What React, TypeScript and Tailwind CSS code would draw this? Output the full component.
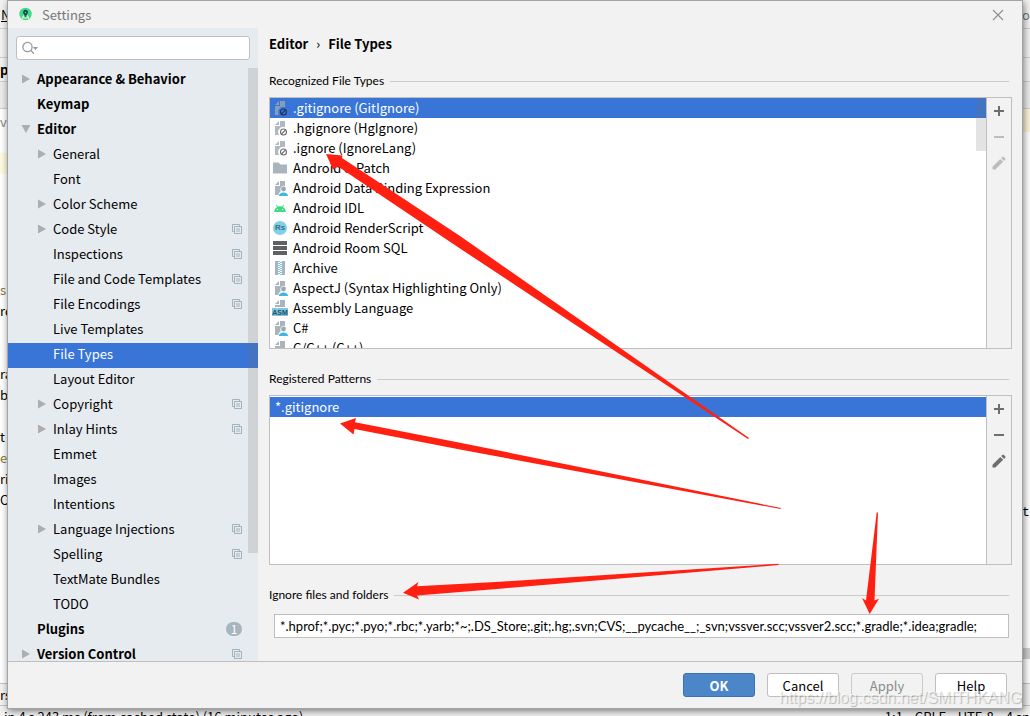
import type { ReactNode } from 'react';

type TreeItem = {
  label: string;
  level?: 0 | 1;
  arrow?: 'right' | 'down';
  project?: boolean;
  badge?: number;
  selected?: boolean;
};

const tree: TreeItem[] = [
  { label: 'Appearance & Behavior', level: 0, arrow: 'right' },
  { label: 'Keymap', level: 0 },
  { label: 'Editor', level: 0, arrow: 'down' },
  { label: 'General', arrow: 'right' },
  { label: 'Font' },
  { label: 'Color Scheme', arrow: 'right' },
  { label: 'Code Style', arrow: 'right', project: true },
  { label: 'Inspections', project: true },
  { label: 'File and Code Templates', project: true },
  { label: 'File Encodings', project: true },
  { label: 'Live Templates' },
  { label: 'File Types', selected: true },
  { label: 'Layout Editor' },
  { label: 'Copyright', arrow: 'right', project: true },
  { label: 'Inlay Hints', arrow: 'right', project: true },
  { label: 'Emmet' },
  { label: 'Images' },
  { label: 'Intentions' },
  { label: 'Language Injections', arrow: 'right', project: true },
  { label: 'Spelling', project: true },
  { label: 'TextMate Bundles' },
  { label: 'TODO' },
  { label: 'Plugins', level: 0, badge: 1 },
  { label: 'Version Control', level: 0, arrow: 'right', project: true },
];

function Page() {
  return (
    <g fill="#9aa7b0" fillOpacity="0.85">
      <path d="M7 1L3 5h4z" />
      <path d="M8 1v5H3v9h10V1z" />
    </g>
  );
}

function IconBox({ children }: { children: ReactNode }) {
  return (
    <svg viewBox="0 0 16 16" className="size-4 shrink-0" aria-hidden="true">
      {children}
    </svg>
  );
}

function IgnoreIcon({ selected }: { selected?: boolean }) {
  return (
    <IconBox>
      <g fill="#9aa7b0" fillOpacity="0.8">
        <path d="M7 1L3 5h4z" />
        <path d="M8 1v5H3v9h4.2A5 5 0 0 1 13 7.300V1z" />
      </g>
      <circle cx="11.500" cy="12" r="3" fill="none" stroke={selected ? '#1f3357' : '#6e6e6e'} strokeWidth="1.100" />
      <path d="M9.500 14l4-4" stroke={selected ? '#1f3357' : '#6e6e6e'} strokeWidth="1.100" />
    </IconBox>
  );
}

function UserFileIcon() {
  return (
    <IconBox>
      <g fill="#9aa7b0" fillOpacity="0.85">
        <path d="M7 1L3 5h4z" />
        <path d="M8 1v5H3v9h3.500c0-2 1-3 2.200-3.600A3.700 3.700 0 0 1 13 6V1z" />
      </g>
      <circle cx="11.500" cy="9" r="2.400" fill="#9aa7b0" />
      <path d="M7 16c0-2.300 1.800-3.500 4.500-3.500S16 13.700 16 16z" fill="#40b6e0" />
    </IconBox>
  );
}

function FolderIcon() {
  return (
    <IconBox>
      <path d="M1 2.500h5.500l2 2H15V13.500H1z" fill="#9aa7b0" fillOpacity="0.85" />
    </IconBox>
  );
}

function AndroidIcon() {
  return (
    <IconBox>
      <path d="M2 12a6 6 0 0 1 3-5L3.900 5l.7-.4L5.800 6.600a6.300 6.300 0 0 1 4.400 0l1.200-2 .7.4L11 7a6 6 0 0 1 3 5z" fill="#3ddc84" />
      <circle cx="5.400" cy="9.600" r=".7" fill="#fff" />
      <circle cx="10.600" cy="9.600" r=".7" fill="#fff" />
    </IconBox>
  );
}

function RenderScriptIcon() {
  return (
    <span className="flex size-4 shrink-0 items-center justify-center">
      <span className="flex size-3.5 items-center justify-center rounded-full bg-[#82cfea] font-['Liberation_Sans',sans-serif] text-[8px] leading-none font-bold text-[#3f6f82]">
        Rs
      </span>
    </span>
  );
}

function SqlIcon() {
  return (
    <IconBox>
      <path d="M1 1h14v4H1zM1 6h14v4H1zM1 11h14v4H1z" fill="#5f6163" />
    </IconBox>
  );
}

function ArchiveIcon() {
  return (
    <IconBox>
      <path d="M3 1h3v14H3zM10 1h3v14h-3z" fill="#9aa7b0" fillOpacity="0.85" />
      <path
        d="M6 1h2v1H6zM8 2h2v1H8zM6 3h2v1H6zM8 4h2v1H8zM6 5h2v1H6zM8 6h2v1H8zM6 7h2v1H6zM8 8h2v1H8zM6 9h2v1H6zM8 10h2v1H8zM6 11h2v1H6zM8 12h2v1H8zM6 13h2v1H6zM8 14h2v1H8z"
        fill="#7cc8e6"
      />
    </IconBox>
  );
}

function AsmIcon() {
  return (
    <span className="flex size-4 shrink-0 flex-col">
      <svg viewBox="0 0 16 8" className="h-2 w-4" aria-hidden="true">
        <path d="M7 0L3 4h4zM8 0v5H3v2h10V0z" fill="#9aa7b0" fillOpacity="0.85" />
      </svg>
      <span className="flex h-2 items-center justify-center bg-[#7cc8e6] font-['Liberation_Sans',sans-serif] text-[7px] leading-none font-bold text-[#2b4a57]">
        ASM
      </span>
    </span>
  );
}

const fileTypes: { label: string; icon: ReactNode; selected?: boolean }[] = [
  { label: '.gitignore (GitIgnore)', icon: <IgnoreIcon selected />, selected: true },
  { label: '.hgignore (HgIgnore)', icon: <IgnoreIcon /> },
  { label: '.ignore (IgnoreLang)', icon: <IgnoreIcon /> },
  { label: 'Android & Patch', icon: <FolderIcon /> },
  { label: 'Android Data Binding Expression', icon: <UserFileIcon /> },
  { label: 'Android IDL', icon: <AndroidIcon /> },
  { label: 'Android RenderScript', icon: <RenderScriptIcon /> },
  { label: 'Android Room SQL', icon: <SqlIcon /> },
  { label: 'Archive', icon: <ArchiveIcon /> },
  { label: 'AspectJ (Syntax Highlighting Only)', icon: <UserFileIcon /> },
  { label: 'Assembly Language', icon: <AsmIcon /> },
  { label: 'C#', icon: <UserFileIcon /> },
  { label: 'C/C++ (C++)', icon: <IconBox><Page /></IconBox> },
];

function ProjectIcon() {
  return (
    <svg viewBox="0 0 10 10" className="size-2.5" aria-hidden="true">
      <path d="M2.500 7.500h-2v-7h7v2" fill="none" stroke="#a3b1ba" />
      <path d="M2.500 2.500h7v7h-7zM4 5h4M4 7h4" fill="none" stroke="#a3b1ba" />
    </svg>
  );
}

function TreeRow({ item }: { item: TreeItem }) {
  const top = item.level === 0;
  return (
    <li>
      <a
        href="#"
        aria-current={item.selected ? 'page' : undefined}
        className={`flex h-[25px] items-center pr-4 pb-[3px] ${top ? 'pl-[13px] font-bold' : 'pl-[29px]'} ${
          item.selected ? 'bg-[#3875d6] text-white' : 'text-black'
        }`}
      >
        <svg viewBox="0 0 16 10" className="h-2.5 w-4 shrink-0" aria-hidden="true">
          {item.arrow === 'right' && <path d="M1 .500v9L9 5z" fill="#adadad" />}
          {item.arrow === 'down' && <path d="M.500 1h9L5 9z" fill="#adadad" />}
        </svg>
        <span className="flex-1 whitespace-nowrap">{item.label}</span>
        {item.project && <ProjectIcon />}
        {item.badge && (
          <span className="flex h-3.5 w-4 items-center justify-center rounded-full bg-[#a7b5be] text-xs leading-none font-normal text-white">
            {item.badge}
          </span>
        )}
      </a>
    </li>
  );
}

function SectionTitle({ children }: { children: string }) {
  return (
    <div className="flex h-5 shrink-0 items-center gap-1.5 pr-[3px]">
      <h2 className="font-[Lato,sans-serif] text-xs whitespace-nowrap">{children}</h2>
      <span className="h-px flex-1 bg-[#cbcbcb]" />
    </div>
  );
}

function Toolbar({ editable }: { editable: boolean }) {
  const off = '#bdbdbd';
  const on = '#6e6e6e';
  const color = editable ? on : off;
  const button = 'flex h-[26px] items-center justify-center';
  return (
    <div className="flex w-[25px] shrink-0 flex-col border-l border-[#bfbfbf]">
      <button type="button" aria-label="Add" className={button}>
        <IconBox><path d="M7 3h2v4h4v2H9v4H7V9H3V7h4z" fill={on} /></IconBox>
      </button>
      <button type="button" aria-label="Remove" disabled={!editable} className={button}>
        <IconBox><path d="M3 7h10v2H3z" fill={color} /></IconBox>
      </button>
      <button type="button" aria-label="Edit" disabled={!editable} className={button}>
        <IconBox>
          <path d="M1.500 11.700L9.300 3.900l2.900 2.900-7.800 7.800H1.500zM10.200 3l1.100-1.100q.8-.8 1.600 0l1.300 1.300q.8.8 0 1.600L13.100 5.900z" fill={color} />
        </IconBox>
      </button>
    </div>
  );
}

const leftLines = ['vc', '', '', '', '', '', '', '', 's', 'rd', '', '', 'ra', 'be', '', 't', 'ert', 'rie', 'C'];
const lineColor = (t: string) => (t === 'vc' ? 'text-[#888]' : t === 's' || t === 'ert' ? 'text-[#857a3c]' : 'text-black');

function Workspace() {
  return (
    <div className="absolute inset-0 flex flex-col bg-white text-[13px] leading-none" aria-hidden="true">
      <div className="flex h-[29px] shrink-0 items-center justify-between border-b border-[#cfcfcf] bg-[#f2f2f2]">
        <span className="pl-px underline">N</span>
        <span className="w-2 overflow-hidden text-[#777]">oc</span>
      </div>
      <div className="h-[29px] shrink-0 border-b border-[#cfcfcf] bg-[#f2f2f2]" />
      <div className="flex h-6 shrink-0 items-center border-b border-[#cfcfcf] bg-[#f2f2f2]">
        <span className="font-bold">pp</span>
      </div>
      <div className="h-[27px] shrink-0 border-b border-[#cfcfcf] bg-[#ececec]" />
      <div className="flex min-h-0 flex-1 justify-between overflow-hidden">
        <div className="w-5 pt-0.5">
          {leftLines.map((t, i) => (
            <div key={i} className={`flex h-[21px] items-center ${lineColor(t)} ${i === 2 ? 'bg-[#fffbe0]' : ''}`}>
              {t}
            </div>
          ))}
        </div>
        <div className="flex w-2 flex-col overflow-hidden">
          <div className="h-[23px] bg-[#fcf5d8]" />
          <div className="mt-[374px] font-['Liberation_Mono',monospace]">te</div>
          <div className="mt-auto mb-6 h-[11px] bg-[#d0d0d0]" />
        </div>
      </div>
      <div className="flex h-[23px] shrink-0 items-center border-y border-[#c4c4c4] bg-[#f2f2f2]">rs</div>
      <div className="flex h-2.5 shrink-0 justify-between overflow-hidden bg-[#f2f2f2] pt-1">
        <span className="pl-1">in 4 s 243 ms (from cached state) (16 minutes ago)</span>
        <span className="flex gap-3">
          <span>1:1</span>
          <span>CRLF</span>
          <span>UTF-8</span>
          <span>4 sp</span>
        </span>
      </div>
    </div>
  );
}

function Arrows() {
  return (
    <svg
      viewBox="0 0 1030 716"
      preserveAspectRatio="none"
      className="pointer-events-none absolute inset-0 size-full"
      fill="#ff2012"
      aria-hidden="true"
    >
      <path d="M326 154L342.500 155.500L342 158L460 236L749 438L748 439L460 248.500L338 166.500L333 169.500z" />
      <path d="M340 423.500L356 418L355 422.300L460 442.700L781 508L780.500 509L460 449.500L354.500 429L353.500 434.500z" />
      <path d="M403 592.700L418.500 582L417 586.300L500 581.700L778.500 563.800V565L500 588.700L417 595.600L419 599.500z" />
      <path d="M869.700 614L862 598L866 600.500L876.700 512.500H878L874.500 600.500L879 598.700z" />
    </svg>
  );
}

const dialogButton = 'h-6 w-[72px] rounded-[3px] border leading-none';

export default function App() {
  return (
    <div className="relative h-screen overflow-hidden px-[7px] pb-[7px] font-['Noto_Sans_CJK_SC','Noto_Sans',sans-serif] text-[13px] leading-5 text-black">
      <Workspace />

      <div
        role="dialog"
        aria-label="Settings"
        className="relative flex h-full flex-col border border-[#a3a3a3] bg-[#f2f2f2] shadow-[1px_2px_7px_rgba(0,0,0,0.5)]"
      >
        <header className="flex h-[27px] shrink-0 items-center pr-[18px] pl-2.5 text-[#777]">
          <svg viewBox="0 0 16 16" className="size-4" aria-hidden="true">
            <circle cx="7.500" cy="7" r="6.200" fill="#3ddc84" />
            <path d="M3.500 13.500L7.500 5l4 8.500M4 9.800q3.500 2.600 7 0" fill="none" stroke="#d5ead9" strokeWidth="1.100" />
            <path d="M7.500 2.800a2.500 2.500 0 0 1 2 4L7.500 10l-2-3.200a2.500 2.500 0 0 1 2-4z" fill="#174a5c" />
            <circle cx="7.500" cy="5.500" r=".8" fill="#3ddc84" />
          </svg>
          <h1 className="flex-1 pl-2">Settings</h1>
          <button type="button" aria-label="Close">
            <svg viewBox="0 0 12 12" className="size-3" aria-hidden="true">
              <path d="M1 1l10 10M11 1L1 11" stroke="#8c8c8c" strokeWidth="1.100" />
            </svg>
          </button>
        </header>

        <div className="flex min-h-0 flex-1">
          <aside className="relative flex w-[250px] shrink-0 flex-col overflow-hidden bg-[#e6ebef] pt-2">
            <label className="mx-2 flex h-6 shrink-0 items-center rounded-[3px] border border-[#bfbfbf] bg-white pl-1">
              <svg viewBox="0 0 20 16" className="h-4 w-5 shrink-0" aria-hidden="true">
                <circle cx="6.500" cy="7" r="4.600" fill="none" stroke="#8f9aa1" strokeWidth="1.300" />
                <path d="M9.800 10.400l3.200 3.300" stroke="#8f9aa1" strokeWidth="1.300" />
                <path d="M12 7h5l-2.500 3z" fill="#8f9aa1" />
              </svg>
              <input type="search" aria-label="Search settings" className="min-w-0 flex-1 outline-none" />
            </label>
            <ul className="mt-2 min-h-0 flex-1 overflow-hidden">
              {tree.map((item) => (
                <TreeRow key={item.label} item={item} />
              ))}
            </ul>
            <div className="absolute top-10 right-0 h-[485px] w-2.5 bg-[#737373]/20" />
          </aside>

          <main className="flex min-w-0 flex-1 flex-col pr-2.5 pb-[23px] pl-[11px]">
            <nav className="flex h-8 shrink-0 items-center gap-2 font-bold" aria-label="Breadcrumb">
              <a href="#">Editor</a>
              <span className="font-normal">›</span>
              <span>File Types</span>
            </nav>

            <div className="mt-[11px]">
              <SectionTitle>Recognized File Types</SectionTitle>
            </div>
            <div className="mt-1.5 flex h-[252px] shrink-0 border border-[#bfbfbf]">
              <div className="relative min-w-0 flex-1 overflow-hidden bg-white">
                <ul role="listbox" aria-label="Recognized File Types">
                  {fileTypes.map((t) => (
                    <li
                      key={t.label}
                      role="option"
                      aria-selected={!!t.selected}
                      className={`flex h-5 items-center gap-[5px] pl-0.5 whitespace-nowrap ${t.selected ? 'bg-[#3875d6] text-white' : ''}`}
                    >
                      {t.icon}
                      {t.label}
                    </li>
                  ))}
                </ul>
                <div className="absolute top-0 right-0 h-[53px] w-2.5 bg-[#737373]/20" />
              </div>
              <Toolbar editable={false} />
            </div>

            <div className="mt-5">
              <SectionTitle>Registered Patterns</SectionTitle>
            </div>
            <div className="mt-1.5 flex min-h-0 flex-1 border border-[#bfbfbf]">
              <ul role="listbox" aria-label="Registered Patterns" className="min-w-0 flex-1 bg-white pt-px">
                <li role="option" aria-selected="true" className="h-5 bg-[#3875d6] pl-[5px] text-white">
                  *.gitignore
                </li>
              </ul>
              <Toolbar editable />
            </div>

            <div className="mt-5">
              <SectionTitle>Ignore files and folders</SectionTitle>
            </div>
            <div className="mt-[9px] flex shrink-0 pr-[3px] pl-[5px]">
              <input
                type="text"
                aria-label="Ignore files and folders"
                defaultValue="*.hprof;*.pyc;*.pyo;*.rbc;*.yarb;*~;.DS_Store;.git;.hg;.svn;CVS;__pycache__;_svn;vssver.scc;vssver2.scc;*.gradle;*.idea;gradle;"
                className="h-6 w-full border border-[#bfbfbf] bg-white px-[5px] font-[Lato,sans-serif] outline-none"
              />
            </div>
          </main>
        </div>

        <footer className="flex h-[47px] shrink-0 items-start justify-end gap-3 border-t border-[#bfbfbf] pt-[11px] pr-[15px]">
          <button type="button" className={`${dialogButton} border-[#3a72b5] bg-[#4a86c8] font-bold text-white`}>OK</button>
          <button type="button" className={`${dialogButton} border-[#bfbfbf] bg-white`}>Cancel</button>
          <button type="button" disabled className={`${dialogButton} border-[#cbcbcb] bg-[#f2f2f2] text-[#8c8c8c]`}>Apply</button>
          <button type="button" className={`${dialogButton} border-[#bfbfbf] bg-white`}>Help</button>
        </footer>
      </div>

      <Arrows />
      <div className="pointer-events-none absolute right-2 bottom-2 font-['Liberation_Sans',sans-serif] text-base leading-5 text-white/60 [text-shadow:1px_1px_1px_rgba(0,0,0,0.25)]">
        https://blog.csdn.net/SMITHKANG
      </div>
    </div>
  );
}
